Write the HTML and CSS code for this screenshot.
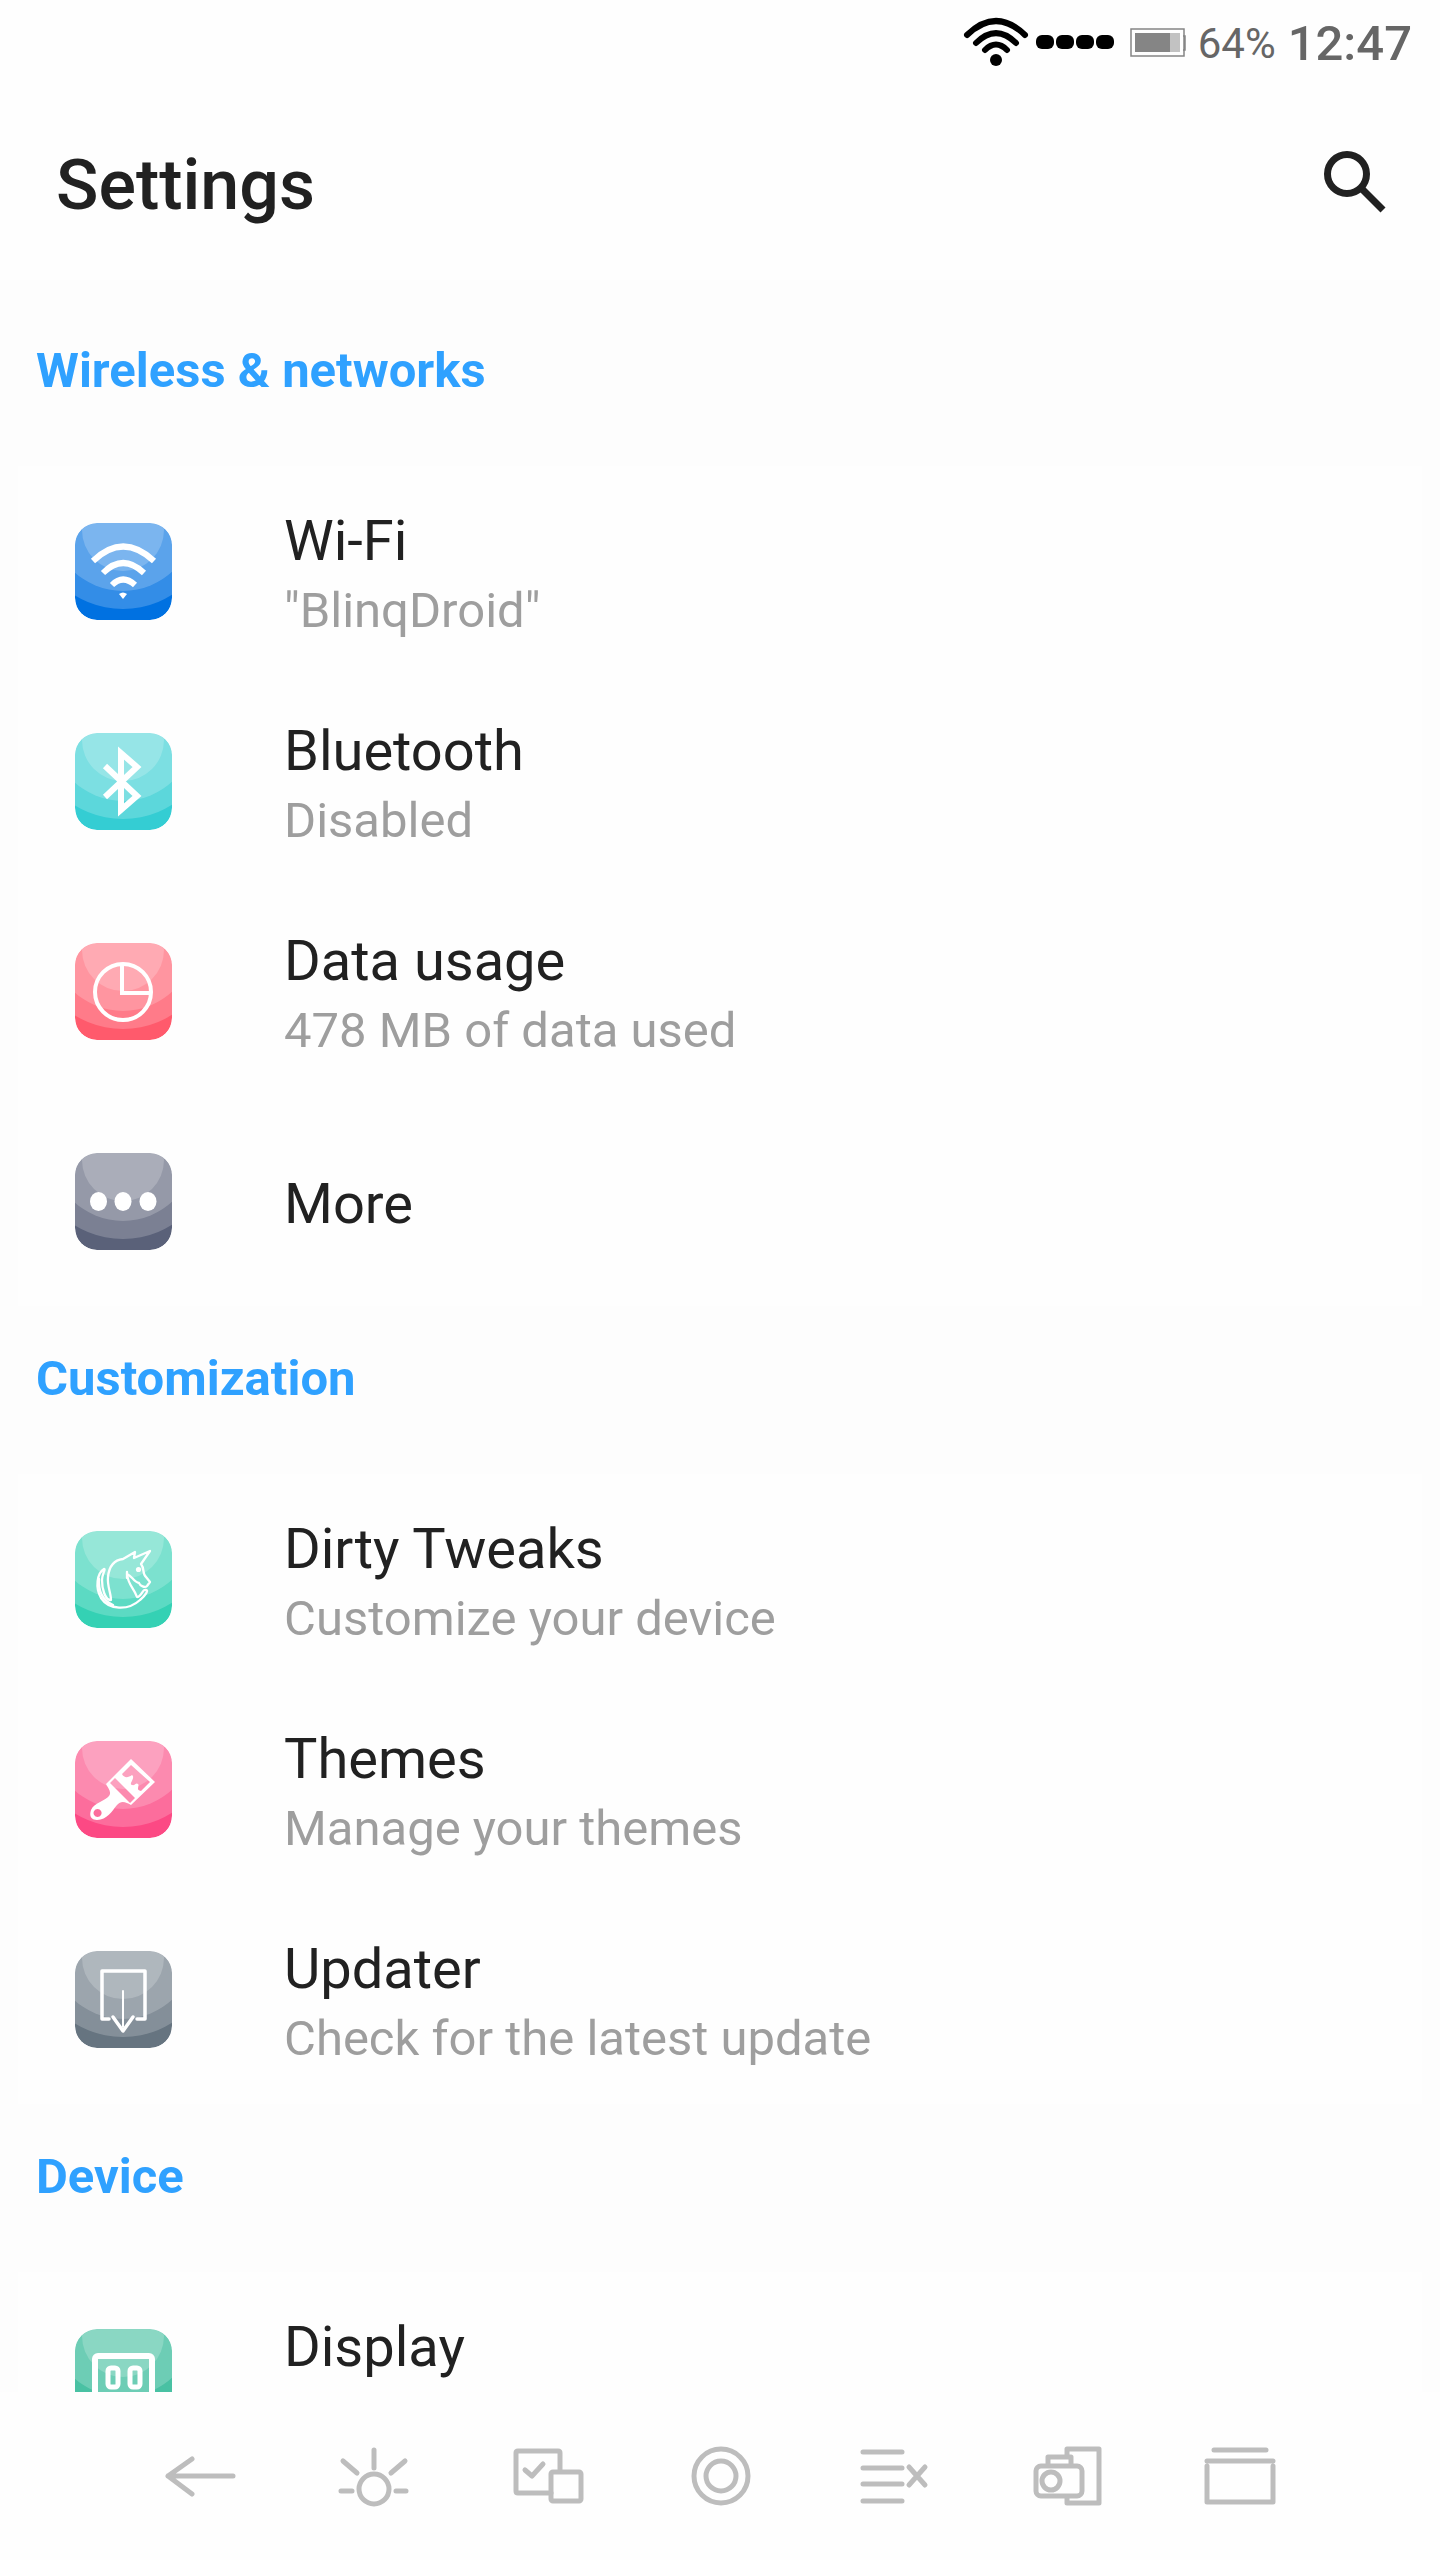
FILE: index.html
```html
<!DOCTYPE html>
<html lang="en">
<head>
<meta charset="utf-8">
<meta name="viewport" content="width=device-width, initial-scale=1">
<title>Settings</title>
<link rel="stylesheet" href="styles.css">
</head>
<body>
<svg class="defs" aria-hidden="true">
  <defs>
    <clipPath id="tile-clip"><rect width="97" height="97" rx="22"/></clipPath>
    <g id="gloss" clip-path="url(#tile-clip)" fill="#fff">
      <rect width="97" height="97" rx="22" fill="currentColor"/>
      <circle cx="48" cy="-6" r="92" fill-opacity=".2"/>
      <circle cx="48" cy="-4" r="72" fill-opacity=".2"/>
      <circle cx="48" cy="7" r="41" fill-opacity=".2"/>
    </g>
  </defs>
</svg>

<div class="screen">
  <div class="status">
    <svg class="status-wifi" viewBox="0 0 66 50" aria-label="Wi-Fi">
      <g fill="none" stroke="#000" stroke-width="6" stroke-linecap="round">
        <path d="M4 18Q33-10 62 18M13 26Q33 6 53 26M22 33Q33 22 44 33"/>
      </g>
      <circle cx="33" cy="43" r="6"/>
    </svg>
    <svg class="status-signal" viewBox="0 0 78 14" aria-label="Signal">
      <rect width="18" height="14" rx="6"/><rect x="20" width="18" height="14" rx="6"/><rect x="40" width="18" height="14" rx="6"/><rect x="60" width="18" height="14" rx="6"/>
    </svg>
    <svg class="status-battery" viewBox="0 0 56 29" aria-label="Battery">
      <path d="M5 5H50V24H5Z" fill="#c2c2c2"/><path d="M5 5H40V24H5Z" fill="#858585"/>
      <path d="M1 1H54V28H1ZM53 8H55V22H53" fill="none" stroke="#858585" stroke-width="1.5"/>
    </svg>
    <span class="percent">64%</span>
    <time class="clock">12:47</time>
  </div>

  <header class="appbar">
    <h1>Settings</h1>
    <button class="search" type="button" aria-label="Search">
      <svg viewBox="0 0 64 64" fill="none" stroke="#212121" stroke-width="7"><circle cx="24" cy="24" r="19.500"/><path d="M39 39L41 41L60 60"/></svg>
    </button>
  </header>

  <main class="list">
    <section>
      <h2>Wireless &amp; networks</h2>
      <ul>
        <li><a class="row" href="#wifi">
          <svg class="tile blue" viewBox="0 0 97 97"><use href="#gloss"/>
            <g fill="none" stroke="#fff" stroke-width="6"><path d="M18 38Q48 9 79 38M28 50Q48 30 69 50M37 62Q48 51 60 62"/></g>
            <path d="M44 71Q48 68 52 71L48 76Z" fill="#fff"/></svg>
          <span class="text"><span class="title">Wi-Fi</span><span class="summary">"BlinqDroid"</span></span></a></li>
        <li><a class="row" href="#bluetooth">
          <svg class="tile cyan" viewBox="0 0 97 97"><use href="#gloss"/>
            <path d="M30 33L62 63L46 77V20L62 34L30 64" fill="none" stroke="#fff" stroke-width="6"/></svg>
          <span class="text"><span class="title">Bluetooth</span><span class="summary">Disabled</span></span></a></li>
        <li><a class="row" href="#data">
          <svg class="tile red" viewBox="0 0 97 97"><use href="#gloss"/>
            <g fill="none" stroke="#fff" stroke-width="4"><circle cx="48" cy="49" r="28"/><path d="M47 21V50H76"/></g></svg>
          <span class="text"><span class="title">Data usage</span><span class="summary">478 MB of data used</span></span></a></li>
        <li><a class="row" href="#more">
          <svg class="tile slate" viewBox="0 0 97 97"><use href="#gloss"/>
            <g fill="#fff"><ellipse cx="23.500" cy="48.500" rx="8.500" ry="9.500"/><ellipse cx="48" cy="48.500" rx="8.500" ry="9.500"/><ellipse cx="73" cy="48.500" rx="8.500" ry="9.500"/></g></svg>
          <span class="text"><span class="title">More</span></span></a></li>
      </ul>
    </section>

    <section>
      <h2>Customization</h2>
      <ul>
        <li><a class="row" href="#tweaks">
          <svg class="tile mint" viewBox="0 0 97 97"><use href="#gloss"/>
            <g fill="none" stroke="#fff" stroke-width="2.300" stroke-linejoin="round" stroke-linecap="round">
              <path d="M36 69C36 62 32 55 33 46C34 36 39 29 48 28L60 21L59 27L75 20L66 33C70 38 67 43 71 46L75 51L72 55C70 57 65 55 64 52C59 51 57 45 52 43C53 54 59 57 62 66C66 66 68 58 70 59C75 58 70 65 65 69C53 80 34 79 26 67C20 57 22 42 29 38C31 38 27 43 27 49C27 58 30 68 35 69"/>
              <path d="M24 48C23 62 29 70 38 74" /><path d="M52 41V47"/>
            </g><circle cx="63.500" cy="38.500" r="2.600" fill="#fff"/></svg>
          <span class="text"><span class="title">Dirty Tweaks</span><span class="summary">Customize your device</span></span></a></li>
        <li><a class="row" href="#themes">
          <svg class="tile pink" viewBox="0 0 97 97"><use href="#gloss"/>
            <path fill="#fff" fill-rule="evenodd" d="M56 18L80 41L56 64C51 61 46 59 42 64C37 70 32 79 22 79C16 79 14 75 16 69C19 62 30 60 34 55C37 51 33 47 31 43ZM56 24L47 33C49 37 53 37 57 34C61 37 53 43 57 44C60 45 61 41 63 43C65 45 60 49 66 50L75 41ZM40 37L35 42L55 62L60 57ZM22.500 68A4 4 0 1 0 22.600 68Z"/></svg>
          <span class="text"><span class="title">Themes</span><span class="summary">Manage your themes</span></span></a></li>
        <li><a class="row" href="#updater">
          <svg class="tile steel" viewBox="0 0 97 97"><use href="#gloss"/>
            <g fill="none" stroke="#fff" stroke-width="3.500" stroke-linecap="round" stroke-linejoin="round"><path d="M34 68H27V20H70V68H62M38 66L48 80L58 66"/><path d="M48 40V76" stroke-width="2"/></g></svg>
          <span class="text"><span class="title">Updater</span><span class="summary">Check for the latest update</span></span></a></li>
      </ul>
    </section>

    <section>
      <h2>Device</h2>
      <ul>
        <li><a class="row" href="#display">
          <svg class="tile green" viewBox="0 0 97 97"><use href="#gloss"/>
            <g fill="none" stroke="#fff"><rect x="20" y="27" width="57" height="52" rx="3" stroke-width="6"/><rect x="33" y="39" width="10" height="19" rx="3" stroke-width="5"/><rect x="55" y="39" width="10" height="19" rx="3" stroke-width="5"/></g></svg>
          <span class="text two-line"><span class="title">Display</span></span></a></li>
      </ul>
    </section>
  </main>

  <nav class="navbar" aria-label="Navigation">
    <button type="button" aria-label="Back"><svg viewBox="0 0 80 80"><path d="M73 40H8L32 23M8 40L32 58"/></svg></button>
    <button type="button" aria-label="Brightness"><svg viewBox="0 0 80 80"><circle cx="41" cy="53" r="15"/><path d="M41 14V32M10 25L24 37M72 25L58 37M8 55H19M63 55H73"/></svg></button>
    <button type="button" aria-label="Split screen"><svg viewBox="0 0 80 80"><path d="M44 57H11Q9 57 9 55V17Q9 15 11 15H51Q53 15 53 17V35M18 34L25 40L36 28"/><rect x="44" y="36" width="30" height="29" rx="2"/></svg></button>
    <button type="button" aria-label="Home"><svg viewBox="0 0 80 80"><circle cx="41" cy="40" r="27"/><circle cx="41" cy="40" r="15"/></svg></button>
    <button type="button" aria-label="Clear list"><svg viewBox="0 0 80 80"><path d="M10 16H49M10 32H49M10 48H49M10 65H49M56 31L72 49M72 31L56 49"/></svg></button>
    <button type="button" aria-label="Screenshot"><svg viewBox="0 0 80 80"><path d="M40 20V13H72V67H40V61M21 29V21H44V29"/><rect x="9" y="30" width="46" height="30" rx="5"/><circle cx="24" cy="45" r="9"/></svg></button>
    <button type="button" aria-label="Recents"><svg viewBox="0 0 80 80"><path d="M14 14H66M7 25H73M7 30V66H73V30"/></svg></button>
  </nav>
</div>
</body>
</html>
```
FILE: styles.css
```css
* {
  box-sizing: border-box;
}

body {
  margin: 0;
  background: #fefefe;
  color: #212121;
  font-family: Roboto, "Noto Sans", sans-serif;
}

.defs {
  position: absolute;
  width: 0;
  height: 0;
}

.screen {
  display: flex;
  flex-direction: column;
  height: 100vh;
}

.status {
  display: flex;
  align-items: center;
  justify-content: flex-end;
  flex: none;
  height: 84px;
  padding: 0 28px 0 0;
  color: #666;
}

.status-wifi {
  width: 66px;
  height: 50px;
}

.status-signal {
  width: 78px;
  height: 14px;
  margin-left: 7px;
}

.status-battery {
  width: 56px;
  height: 29px;
  margin-left: 16px;
}

.percent,
.clock {
  margin-left: 12px;
  padding-top: 3px;
}

.percent {
  font-size: 42px;
}

.clock {
  font-size: 49px;
  font-weight: 500;
}

.appbar {
  display: flex;
  align-items: center;
  justify-content: space-between;
  flex: none;
  height: 196px;
  padding: 0 53px 0 56px;
}

h1 {
  margin: 0;
  padding-top: 6px;
  font-size: 70px;
  font-weight: 500;
}

button {
  display: flex;
  margin: 0;
  padding: 0;
  border: 0;
  background: none;
}

.search svg {
  width: 64px;
  height: 64px;
}

.list {
  flex: 1;
  min-height: 0;
  padding-top: 18px;
  overflow: hidden;
  background: #fdfdfd;
}

h2 {
  height: 168px;
  margin: 0;
  padding: 44px 36px 0;
  color: #2fa1ff;
  font-size: 49px;
  font-weight: 700;
  line-height: 58px;
}

ul {
  margin: 0 18px;
  padding: 0;
  background: #fefefe;
  list-style: none;
}

.row {
  display: flex;
  align-items: center;
  gap: 112px;
  height: 210px;
  padding: 0 57px;
  color: inherit;
  text-decoration: none;
}

.tile {
  flex: none;
  width: 97px;
  height: 97px;
}

.blue { color: #0071e1; }
.cyan { color: #34cdd3; }
.red { color: #ff5a6c; }
.slate { color: #5a6179; }
.mint { color: #34d1b4; }
.pink { color: #fc4984; }
.steel { color: #667480; }
.green { color: #1cb28c; }

.text {
  display: flex;
  flex-direction: column;
  padding-top: 6px;
}

.two-line {
  min-height: 146px;
}

.title {
  font-size: 56px;
  line-height: 74px;
}

.summary {
  color: #9e9e9e;
  font-size: 49px;
  line-height: 66px;
}

.navbar {
  display: flex;
  align-items: center;
  justify-content: space-between;
  flex: none;
  height: 168px;
  padding: 0 160px;
}

.navbar svg {
  width: 80px;
  height: 80px;
  fill: none;
  stroke: #bdbdbd;
  stroke-width: 5;
  stroke-linecap: round;
  stroke-linejoin: round;
}
```
